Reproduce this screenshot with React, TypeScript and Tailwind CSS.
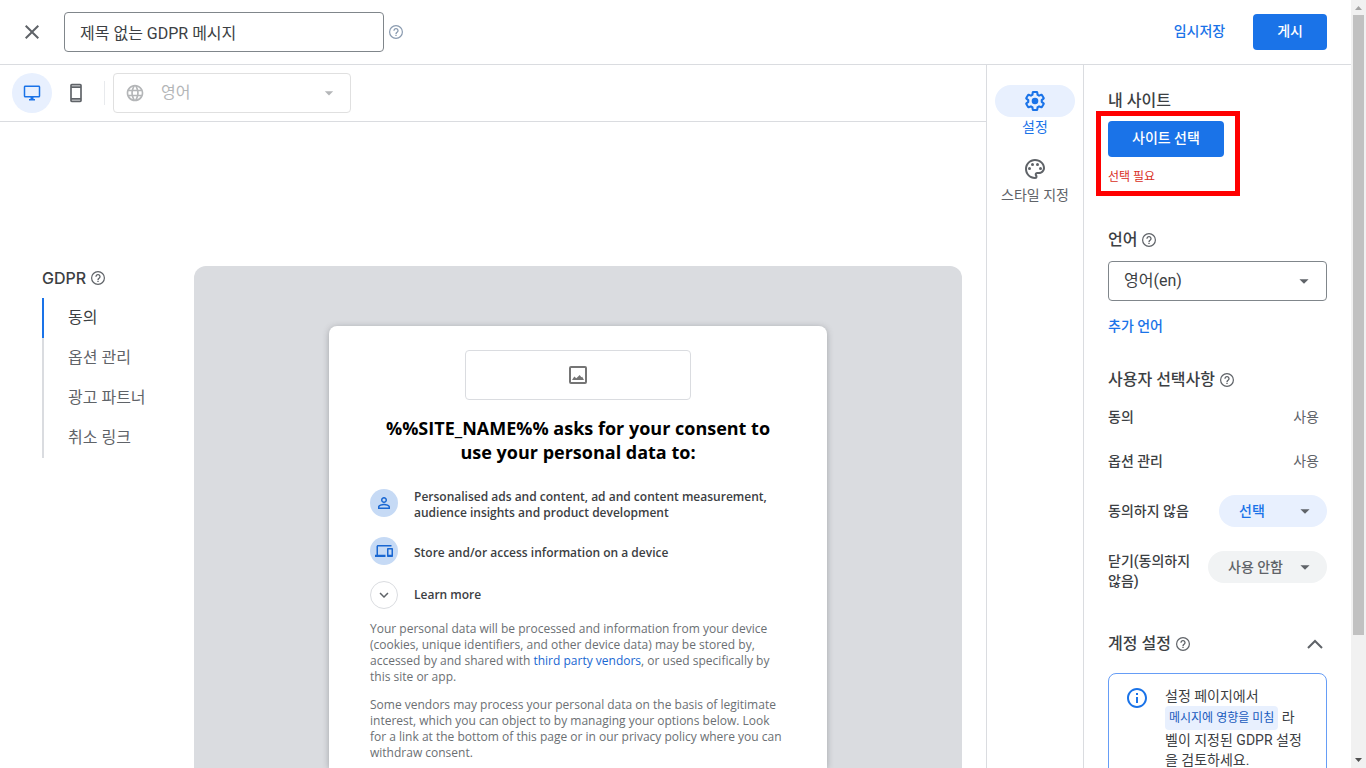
import React from "react";
import {
  MdClose, MdOutlineDesktopWindows, MdLanguage, MdOutlinePalette, MdOutlineInfo,
  MdPersonOutline, MdOutlineDevices, MdKeyboardArrowDown, MdArrowDropDown,
} from "react-icons/md";

function Help({ className = "text-[#5f6368]" }: { className?: string }) {
  return (
    <button aria-label="도움말" className={`shrink-0 ${className}`}>
      <svg width="16" height="16" viewBox="0 0 24 24" aria-hidden="true">
        <circle cx="12" cy="12" r="9.6" fill="none" stroke="currentColor" strokeWidth="1.8" />
        <path fill="currentColor" d="M11 16h2v2h-2zM12 6c-2.21 0-4 1.79-4 4h2c0-1.1.9-2 2-2s2 .9 2 2c0 2-3 1.75-3 5h2c0-2.25 3-2.5 3-5 0-2.21-1.79-4-4-4z" />
      </svg>
    </button>
  );
}

function SettingsIcon() {
  return (
    <svg width="24" height="24" viewBox="0 0 24 24" fill="currentColor" aria-hidden="true">
      <g transform="translate(12 12) scale(0.9) translate(-12 -12)">
        <path
          fill="none"
          stroke="currentColor"
          strokeWidth="2.3"
          strokeLinejoin="round"
          d="M19.43 12.98c.04-.32.07-.64.07-.98 0-.34-.03-.66-.07-.98l2.11-1.65c.19-.15.24-.42.12-.64l-2-3.46a.5.5 0 0 0-.61-.22l-2.49 1c-.52-.4-1.08-.73-1.69-.98l-.38-2.65A.49.49 0 0 0 14 2h-4c-.25 0-.46.18-.49.42l-.38 2.65c-.61.25-1.17.59-1.69.98l-2.49-1a.5.5 0 0 0-.61.22l-2 3.46c-.13.22-.07.49.12.64l2.11 1.65c-.04.32-.07.65-.07.98 0 .33.03.66.07.98l-2.11 1.65c-.19.15-.24.42-.12.64l2 3.46c.12.22.39.3.61.22l2.49-1c.52.4 1.08.73 1.69.98l.38 2.65c.03.24.24.42.49.42h4c.25 0 .46-.18.49-.42l.38-2.65c.61-.25 1.17-.59 1.69-.98l2.49 1c.23.09.49 0 .61-.22l2-3.46c.12-.22.07-.49-.12-.64z"
        />
      </g>
      <circle cx="12" cy="12" r="3.3" />
    </svg>
  );
}

function PhoneIcon() {
  return (
    <svg width="20" height="20" viewBox="0 0 24 24" fill="currentColor" aria-hidden="true">
      <path fillRule="evenodd" d="M17 1H7c-1.1 0-2 .9-2 2v18c0 1.1.9 2 2 2h10c1.1 0 2-.9 2-2V3c0-1.1-.9-2-2-2zm0 20H7v-1h10zm0-3H7V6h10zm0-14H7V3h10z" />
    </svg>
  );
}

function ImageIcon() {
  return (
    <svg width="18" height="18" viewBox="0 0 18 18" fill="currentColor" aria-hidden="true">
      <path fillRule="evenodd" d="M2 0h14a2 2 0 0 1 2 2v14a2 2 0 0 1-2 2H2a2 2 0 0 1-2-2V2a2 2 0 0 1 2-2zm0 2v14h14V2z" />
      <path d="M3 14l2.3-3.4 2 1.7L10.7 9l1.7 2.3.8-.5L15 14z" />
    </svg>
  );
}

const steps = ["동의", "옵션 관리", "광고 파트너", "취소 링크"];

function TopBar() {
  return (
    <header className="flex h-[65px] shrink-0 items-center border-b border-[#dadce0] pl-5 pr-6">
      <button aria-label="닫기" className="text-[#5f6368]"><MdClose size={24} /></button>
      <input
        aria-label="메시지 이름"
        defaultValue="제목 없는 GDPR 메시지"
        className="ml-5 h-10 w-80 rounded border border-[#80868b] bg-white px-[15px] text-base text-[#3c4043]"
      />
      <Help className="ml-1 text-[#8a9bb0]" />
      <div className="ml-auto flex items-center gap-7 text-sm font-medium">
        <button className="h-9 pb-0.5 text-[#1a73e8]">임시저장</button>
        <button className="h-9 rounded bg-[#1a73e8] px-6 pb-0.5 text-white">게시</button>
      </div>
    </header>
  );
}

function PreviewToolbar() {
  return (
    <div className="flex h-[57px] shrink-0 items-center border-b border-[#dadce0] pl-3">
      <button aria-label="데스크톱" className="flex size-10 items-center justify-center rounded-full bg-[#e8f0fe] text-[#1a73e8]">
        <MdOutlineDesktopWindows size={18} />
      </button>
      <button aria-label="모바일" className="ml-1 flex size-10 items-center justify-center text-[#5f6368]">
        <PhoneIcon />
      </button>
      <div className="ml-2 h-6 w-px bg-[#e8eaed]" />
      <div className="relative ml-2 flex h-10 w-[238px] items-center rounded-sm border border-[#e0e0e0] text-[#b4b6b8]">
        <MdLanguage size={20} className="pointer-events-none absolute left-[11px]" />
        <select disabled aria-label="미리보기 언어" className="h-full w-full appearance-none bg-transparent pl-[47px] text-base opacity-100">
          <option>영어</option>
        </select>
        <MdArrowDropDown size={20} className="pointer-events-none absolute right-[11px]" />
      </div>
    </div>
  );
}

function MessagePreview() {
  return (
    <div className="flex min-w-0 flex-1 justify-center overflow-hidden rounded-t-xl bg-[#dadce0] pt-[60px]">
      <article className="w-[498px] rounded-t-lg bg-white px-[41px] pt-6 font-['Open_Sans',sans-serif] shadow-[0_1px_6px_rgba(60,64,67,0.35)]">
        <div className="mx-auto flex h-[50px] w-[226px] items-center justify-center rounded border border-[#dadce0] text-[#757575]">
          <ImageIcon />
        </div>
        <h1 className="mt-4 text-center text-lg/6 font-bold text-black">
          %%SITE_NAME%% asks for your consent to use your personal data to:
        </h1>
        <ul className="mt-[25px] text-xs/4 font-semibold text-[#3c4043]">
          <li className="flex items-start gap-4">
            <span className="flex size-7 shrink-0 items-center justify-center rounded-full bg-[#c6daf5] text-[#1967d2]"><MdPersonOutline size={18} /></span>
            <span>Personalised ads and content, ad and content measurement, audience insights and product development</span>
          </li>
          <li className="mt-4 flex items-center gap-4">
            <span className="flex size-7 shrink-0 items-center justify-center rounded-full bg-[#c6daf5] text-[#1967d2]"><MdOutlineDevices size={18} /></span>
            <span className="pt-1">Store and/or access information on a device</span>
          </li>
          <li className="mt-4">
            <button className="flex items-center gap-4">
              <span className="flex size-7 shrink-0 items-center justify-center rounded-full border border-[#dadce0] text-[#5f6368]"><MdKeyboardArrowDown size={18} /></span>
              <span>Learn more</span>
            </button>
          </li>
        </ul>
        <p className="mt-3 text-xs/4 text-[#6b6f73]">
          Your personal data will be processed and information from your device (cookies, unique identifiers, and other device data) may be stored by, accessed by and shared with <a href="#vendors" className="text-[#1967d2]">third party vendors</a>, or used specifically by this site or app.
        </p>
        <p className="mt-3 text-xs/4 text-[#6b6f73]">
          Some vendors may process your personal data on the basis of legitimate interest, which you can object to by managing your options below. Look for a link at the bottom of this page or in our privacy policy where you can withdraw consent.
        </p>
      </article>
    </div>
  );
}

function Preview() {
  return (
    <main className="flex min-w-0 flex-1 flex-col">
      <PreviewToolbar />
      <div className="flex min-h-0 flex-1 pl-[42px] pr-6 pt-36">
        <nav className="w-[152px] shrink-0">
          <h2 className="flex h-6 items-center gap-1 font-['Inter',sans-serif] text-base font-medium text-[#3c4043]">
            GDPR <Help />
          </h2>
          <ul className="mt-2 text-base text-[#5f6368]">
            {steps.map((s, i) => (
              <li key={s} className={i === 0 ? "border-l-2 border-[#1a73e8] text-[#3c4043]" : "border-l-2 border-[#dadce0]"}>
                <a href="#step" className="flex h-10 items-center pl-6">{s}</a>
              </li>
            ))}
          </ul>
        </nav>
        <MessagePreview />
      </div>
    </main>
  );
}

function Rail() {
  return (
    <nav className="flex w-[98px] shrink-0 flex-col items-center border-x border-[#dadce0] pt-5 text-sm/5">
      <button className="flex flex-col items-center text-[#1a73e8]">
        <span className="flex h-8 w-20 items-center justify-center rounded-full bg-[#e8f0fe]"><SettingsIcon /></span>
        설정
      </button>
      <button className="mt-4 flex flex-col items-center text-[#5f6368]">
        <span className="flex h-8 w-20 items-center justify-center"><MdOutlinePalette size={24} /></span>
        스타일 지정
      </button>
    </nav>
  );
}

function SettingsPanel() {
  return (
    <aside className="w-[267px] shrink-0 overflow-hidden px-6 pt-6 text-sm/5 text-[#3c4043]">
      <h2 className="text-base/6 font-medium">내 사이트</h2>
      <div className="-mx-3 -mt-[2px] w-36 border-[5px] border-[#ff0000] px-[7px] pb-1 pt-[5px]">
        <button className="h-9 rounded bg-[#1a73e8] px-6 pb-0.5 font-medium text-white">사이트 선택</button>
        <p className="mt-[10px] text-xs/5 text-[#d93025]">선택 필요</p>
      </div>

      <h2 className="mt-8 flex items-center gap-1 text-base/6 font-medium">언어 <Help /></h2>
      <div className="relative mt-[9px] flex h-10 items-center rounded border border-[#80868b]">
        <select aria-label="언어" className="h-full w-full appearance-none bg-transparent px-[15px] text-base">
          <option>영어(en)</option>
        </select>
        <MdArrowDropDown size={22} className="pointer-events-none absolute right-[11px] text-[#5f6368]" />
      </div>
      <a href="#languages" className="mt-[15px] block font-medium text-[#1a73e8]">추가 언어</a>

      <h2 className="mt-8 flex items-center gap-1 text-base/6 font-medium">사용자 선택사항 <Help /></h2>
      <div className="mt-[15px] flex justify-between pr-2"><span className="font-medium">동의</span><span className="text-[#5f6368]">사용</span></div>
      <div className="mt-6 flex justify-between pr-2"><span className="font-medium">옵션 관리</span><span className="text-[#5f6368]">사용</span></div>
      <div className="mt-6 flex items-center justify-between">
        <span className="font-medium">동의하지 않음</span>
        <button className="flex h-8 w-[108px] items-center justify-between rounded-full bg-[#e8f0fe] pl-5 pr-[11px] font-medium text-[#1a73e8]">
          선택 <MdArrowDropDown size={22} className="text-[#5f6368]" />
        </button>
      </div>
      <div className="mt-6 flex items-start justify-between">
        <span className="w-[90px] font-medium">닫기(동의하지 않음)</span>
        <button className="flex h-8 w-[119px] items-center justify-between rounded-full bg-[#f1f3f4] pl-5 pr-[11px] font-medium text-[#5f6368]">
          사용 안함 <MdArrowDropDown size={22} />
        </button>
      </div>

      <div className="mt-[41px] flex items-center justify-between">
        <h2 className="flex items-center gap-1 text-base/6 font-medium">계정 설정 <Help /></h2>
        <button aria-label="접기" className="pr-1 text-[#5f6368]">
          <svg width="16" height="10" viewBox="0 0 16 10" fill="none" stroke="currentColor" strokeWidth="2"><path d="M1 9l7-7 7 7" /></svg>
        </button>
      </div>
      <div className="mt-[17px] flex gap-4 rounded-lg border border-[#669df6] pb-6 pl-4 pr-5 pt-3">
        <MdOutlineInfo size={24} className="shrink-0 text-[#1a73e8]" />
        <p className="break-all">
          설정 페이지에서 <span className="inline-block rounded-sm bg-[#e8f0fe] px-1 text-xs/6 text-[#185abc]">메시지에 영향을 미침</span> 라벨이 지정된 GDPR 설정을 검토하세요.
        </p>
      </div>
    </aside>
  );
}

function ScrollBar() {
  return (
    <div className="flex w-[15px] shrink-0 flex-col items-center bg-[#f1f1f1]" aria-hidden="true">
      <svg width="15" height="15" viewBox="0 0 15 15" fill="#a3a3a3"><path d="M4 10l3.5-4 3.5 4z" /></svg>
      <div className="flex w-full flex-1 flex-col px-0.5">
        <div className="h-[84%] bg-[#c1c1c1]" />
      </div>
      <svg width="15" height="15" viewBox="0 0 15 15" fill="#505050"><path d="M4 5l3.5 4L11 5z" /></svg>
    </div>
  );
}

export default function App() {
  return (
    <div className="flex h-screen overflow-hidden bg-white font-[Roboto,'Noto_Sans_CJK_KR',sans-serif]">
      <div className="flex min-w-0 flex-1 flex-col">
        <TopBar />
        <div className="flex min-h-0 flex-1">
          <Preview />
          <Rail />
          <SettingsPanel />
        </div>
      </div>
      <ScrollBar />
    </div>
  );
}
